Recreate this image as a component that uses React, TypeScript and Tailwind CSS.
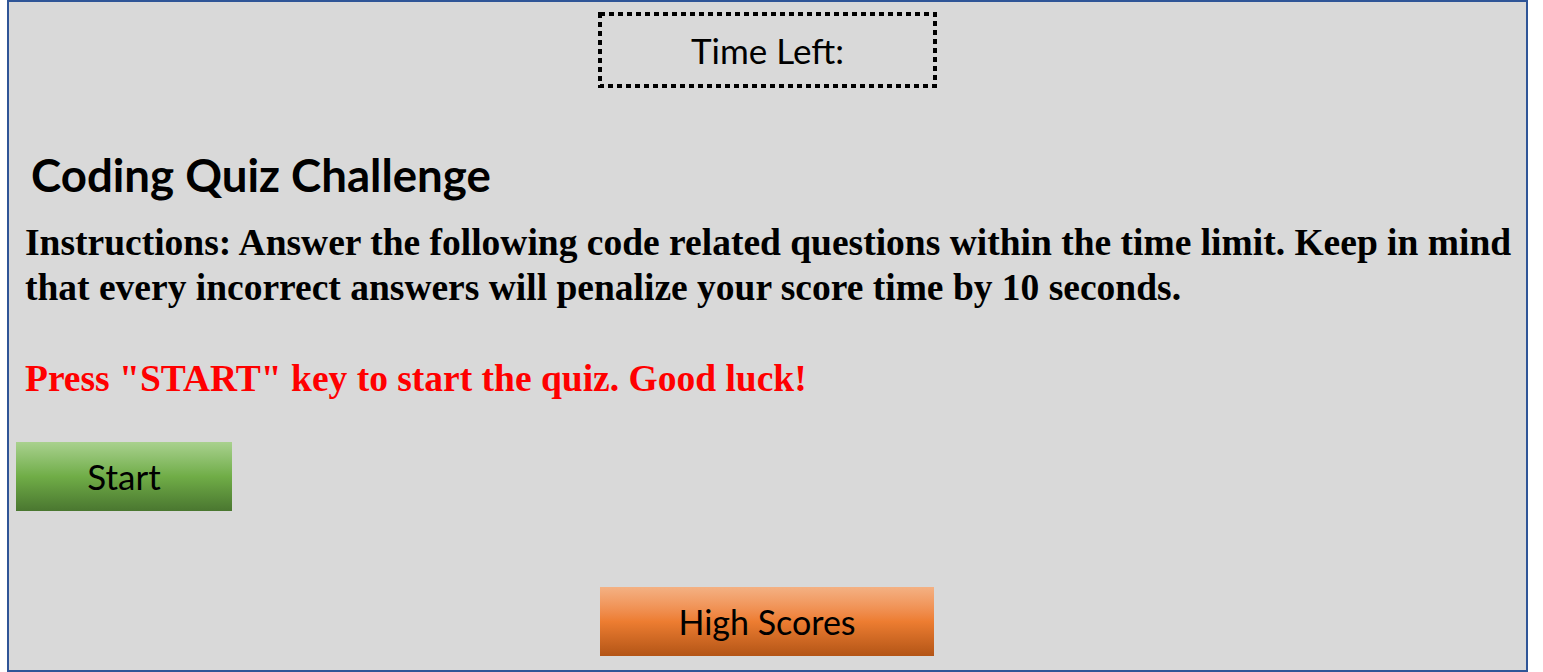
import React from 'react';

const sans = { fontFamily: 'Lato, "Open Sans", sans-serif' };
const serif = { fontFamily: '"Liberation Serif", "Times New Roman", serif' };

export default function App() {
  return (
    <div className="w-[1543px] h-[672px] bg-white">
      <div className="ml-[7px] w-[1521px] h-[672px] border-2 border-[#2f5597] bg-[#d9d9d9] flex flex-col" style={sans}>
        <div className="relative self-center mt-[10px] w-[339px] h-[76px] flex items-center justify-center">
          <svg className="absolute inset-0" width="339" height="76">
            <rect x="2" y="2" width="335" height="72" fill="none" stroke="#000" strokeWidth="4" strokeDasharray="5 4" />
          </svg>
          <span className="text-[35px] text-black leading-none">Time Left:</span>
        </div>

        <h1 className="mt-[63px] ml-[22px] text-[45.6px] font-bold text-black leading-[48px]">Coding Quiz Challenge</h1>

        <p className="mt-[21px] ml-[16px] text-[37.5px] font-bold text-black leading-[45px]" style={serif}>
          Instructions: Answer the following code related questions within the time limit. Keep in mind that every incorrect answers will penalize your score time by 10 seconds.
        </p>

        <p className="mt-[46px] ml-[16px] text-[37.5px] font-bold text-[#ff0000] leading-[45px]" style={serif}>
          Press "START" key to start the quiz. Good luck!
        </p>

        <button className="mt-[41px] ml-[7px] w-[216px] h-[69px] bg-gradient-to-b from-[#a9d18e] via-[#70ad47] to-[#4a7730] text-[35px] text-black">
          Start
        </button>

        <div className="mt-[76px] flex justify-center pr-[1px]">
          <button className="w-[334px] h-[69px] bg-gradient-to-b from-[#f4b183] via-[#ed7d31] to-[#b35516] text-[34px] text-black">
            High Scores
          </button>
        </div>
      </div>
    </div>
  );
}
